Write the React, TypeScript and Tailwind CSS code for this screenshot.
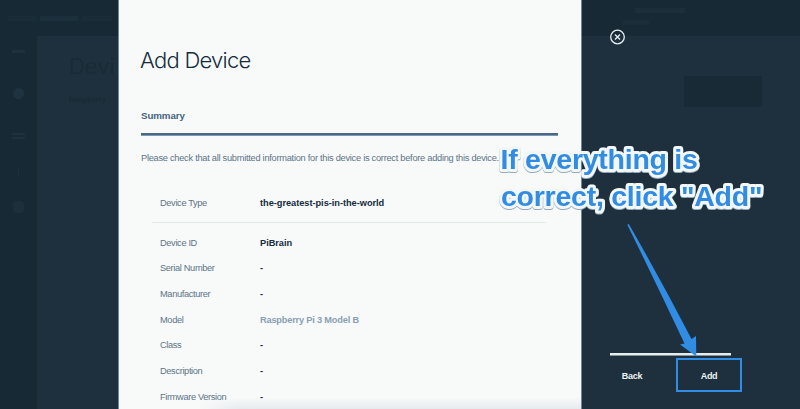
import React from "react";

const details = [
  { label: "Device ID", value: "PiBrain" },
  { label: "Serial Number", value: "-" },
  { label: "Manufacturer", value: "-" },
  { label: "Model", value: "Raspberry Pi 3 Model B", muted: true },
  { label: "Class", value: "-" },
  { label: "Description", value: "-" },
  { label: "Firmware Version", value: "-" },
];

function Row({ label, value, muted = false }: { label: string; value: string; muted?: boolean }) {
  return (
    <div className="flex h-[25.65px] items-center pl-[8px] font-['Liberation_Sans',sans-serif] leading-none">
      <span className="w-[100px] text-[9.25px] tracking-[-0.35px] text-[#5c7488]">{label}</span>
      <span
        className={
          muted
            ? "text-[9.25px] font-bold tracking-[-0.2px] text-[#8a9fb3]"
            : "text-[9.25px] font-bold tracking-[-0.04px] text-[#152c3e]"
        }
      >
        {value}
      </span>
    </div>
  );
}

function DimmedPage() {
  return (
    <div className="absolute inset-0 flex flex-col bg-[#172935] text-[#203440]">
      <header className="flex h-[36px] shrink-0 items-center justify-between pl-[8px] pr-[115px]">
        <span className="flex gap-1">
          <span className="h-[5px] w-[28px] bg-[#192c38]" />
          <span className="h-[5px] w-[38px] bg-[#1c2f3c]" />
          <span className="h-[5px] w-[30px] bg-[#192c38]" />
        </span>
        <span className="flex flex-col gap-[7px] pb-1">
          <span className="ml-[12px] h-[5px] w-[50px] bg-[#1b2e3a]" />
          <span className="h-[5px] w-[26px] bg-[#1a2d39]" />
        </span>
      </header>
      <div className="flex min-h-0 flex-1">
        <nav className="flex w-[37px] shrink-0 flex-col items-center">
          <span className="mt-[14px] h-[3px] w-[13px] bg-[#1e313e]" />
          <span className="mt-[35px] h-[11px] w-[11px] rounded-full bg-[#1f323f]" />
          <span className="mt-[34px] h-[2px] w-[13px] bg-[#1e313d]" />
          <span className="mt-[2px] h-[2px] w-[13px] bg-[#1e313d]" />
          <span className="mt-[28px] h-[8px] w-[1px] bg-[#1e313d]" />
          <span className="mt-[26px] h-[12px] w-[11px] rounded-sm bg-[#1c2f3b]" />
        </nav>
        <main className="flex flex-1 items-start justify-between bg-[#1e303d] pr-[38px]">
          <div className="ml-[32px] w-[48px] overflow-hidden pt-[19px] text-[#182a35]">
            <div className="text-[22px] font-light leading-[22px]">Devi</div>
            <div className="mt-[18px] font-['Liberation_Sans',sans-serif] text-[7.5px] font-bold leading-[9px]">Raspberry</div>
          </div>
          <div className="mt-[40px] h-[31px] w-[78px] bg-[#182a36]" />
        </main>
      </div>
    </div>
  );
}

export default function App() {
  return (
    <div className="relative h-[409px] w-[800px] overflow-hidden font-['Inter','Liberation_Sans',sans-serif]">
      <DimmedPage />
      <div className="relative flex h-full pl-[118px]">
        <section className="relative w-[464px] shrink-0 border-x border-[#6f8796] bg-[#f8faf9] pl-[22px]">
          <h1 className="-ml-px pt-[48px] text-[22px] font-light leading-[24px] tracking-[-0.75px] text-[#152c40]">
            Add Device
          </h1>
          <h2 className="mt-[38px] font-['Liberation_Sans',sans-serif] text-[9.75px] font-bold leading-[12px] tracking-[-0.1px] text-[#46637d]">
            Summary
          </h2>
          <div className="mt-[11px] h-[3px] w-[417px] border-b border-[#7799bb] bg-[#4c6880]" />
          <p className="mt-[16px] whitespace-nowrap font-['Liberation_Sans',sans-serif] text-[9.25px] leading-[12px] tracking-[-0.265px] text-[#5c7488]">
            Please check that all submitted information for this device is correct before adding this device.
          </p>
          <div className="ml-[11px] mt-[27px] w-[394px] border-b border-[#e3eaeb] pb-[5px]">
            <Row label="Device Type" value="the-greatest-pis-in-the-world" />
          </div>
          <div className="ml-[11px] mt-[8px]">
            {details.map((d) => (
              <Row key={d.label} label={d.label} value={d.value} muted={d.muted} />
            ))}
          </div>
          <div className="absolute bottom-0 right-0 h-[11px] w-[382px] bg-linear-to-t from-[#e5eaed] to-[#e5eaed00] [mask-image:linear-gradient(to_right,transparent,black_40px)]" />
        </section>
        <aside className="flex flex-1 flex-col pl-[28px]">
          <button className="mt-[29px] h-[16px] w-[16px]" aria-label="Close">
            <svg viewBox="0 0 16 16" className="h-[16px] w-[16px]" fill="none" stroke="#e6edf0">
              <circle cx="7.5" cy="8" r="6.8" strokeWidth="1.3" />
              <path d="M5 5.5l5 5M10 5.5l-5 5" strokeWidth="1.4" />
            </svg>
          </button>
          <div className="mt-[308px] h-[3px] w-[121px] shrink-0 border-b border-[#84929a] bg-[#e7eced]" />
          <div className="mt-[2px] flex items-center font-['Liberation_Sans',sans-serif] text-[9px] font-bold leading-none tracking-[-0.3px] text-[#edf2f3]">
            <button className="h-[34px] w-[44px] pt-[2px]">Back</button>
            <button className="ml-[22px] h-[34px] w-[66px] border-2 border-[#318ce3] pt-[2px]">Add</button>
          </div>
        </aside>
      </div>
      <svg className="pointer-events-none absolute left-0 top-0" width="800" height="409">
        <path d="M627.3 224.7 L628.8 223.9 Q662 282 691.5 339 L696 336 L696.3 356.5 L680 344.5 L684.5 343.5 Q656 283 627.3 224.7 Z" fill="#318ce3" />
        <g
          className="font-['Liberation_Sans',sans-serif] text-[28.5px] font-bold tracking-[-0.25px] [filter:drop-shadow(0_1px_0.5px_#91a9b9)] [paint-order:stroke_fill]"
          fill="#318ce3"
          stroke="#f3f7f8"
          strokeWidth="6"
          strokeLinejoin="round"
        >
          <text x="500.5" y="168.5">If everything is</text>
          <text x="501" y="205.5">correct, click "Add"</text>
        </g>
      </svg>
    </div>
  );
}
